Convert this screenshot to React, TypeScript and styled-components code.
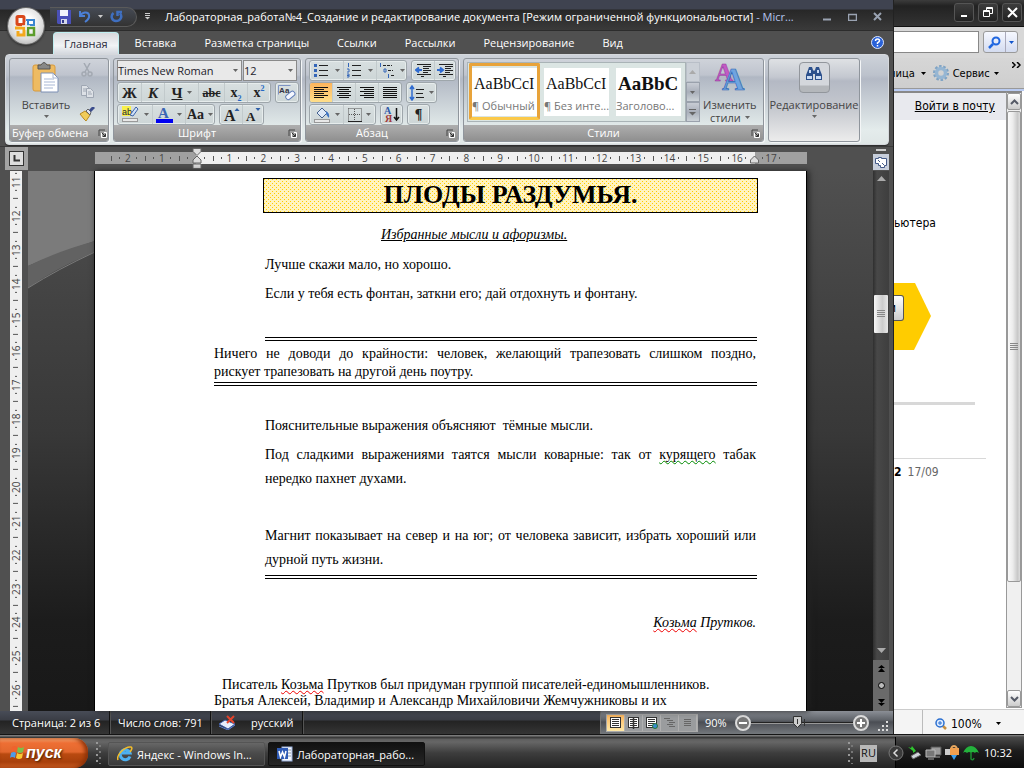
import React from "react";
import styled, { createGlobalStyle, css } from "styled-components";

const UI = '"Open Sans", "Noto Sans", sans-serif';
const TAHOMA = '"DejaVu Sans Condensed", "DejaVu Sans", sans-serif';
const SERIF = '"Liberation Serif", "Times New Roman", serif';

const Global = createGlobalStyle`
  * { box-sizing: border-box; }
  body { margin: 0; background: #1a1a1a; font-family: ${UI}; font-size: 12px; }
  button, select, input { font: inherit; color: inherit; margin: 0; }
  button { border: 0; padding: 0; background: none; cursor: pointer; }
  svg { display: block; flex: none; }
`;

const Screen = styled.div`
  display: flex;
  flex-direction: column;
  min-height: 100vh;
  overflow: hidden;
`;
const Desktop = styled.div`
  flex: 1;
  display: flex;
  min-height: 0;
`;

/* ---------- Word window ---------- */
const Word = styled.section`
  position: relative;
  flex: 1;
  min-width: 0;
  display: flex;
  flex-direction: column;
  background: #505050;
  border-right: 1px solid #222;
`;
const TitleBar = styled.header`
  height: 31px;
  display: flex;
  align-items: center;
  padding: 3px 8px 0 50px;
  background: linear-gradient(#3f4350 0 9px, #272727 10px, #3a3a3a 30px);
  border-bottom: 1px solid #2c2c2c;
  color: #fff;
`;
const QuickAccess = styled.div`
  display: flex;
  align-items: center;
  height: 20px;
  width: 87px;
  padding-left: 7px;
  gap: 7px;
  border: 1px solid #5a5a5a;
  border-left: 0;
  border-radius: 0 10px 10px 0;
  background: linear-gradient(#454a54, #333);
`;
const QuickMore = styled.button`
  margin: 0 14px 0 7px;
`;
const Title = styled.h1`
  flex: 1;
  min-width: 0;
  margin: 0;
  font-size: 11px;
  line-height: 18px;
  font-weight: 500;
  white-space: nowrap;
  span { color: #b5c5ee; }
`;
const Caption = styled.div`
  display: flex;
  gap: 9px;
`;
const CaptionButton = styled.button`
  display: grid;
  place-items: center;
  width: 16px;
  height: 16px;
`;
const OfficeButton = styled.button`
  position: absolute;
  left: 8px;
  top: 8px;
  width: 36px;
  height: 36px;
  border-radius: 50%;
  display: grid;
  place-items: center;
  background: radial-gradient(circle at 50% 40%, #fff 20%, #dcdcdc 60%, #9a9a9a);
  box-shadow: 0 0 0 1px #6b6b6b, 0 1px 3px #111;
`;
const Tabs = styled.nav`
  display: flex;
  align-items: flex-end;
  height: 23px;
  padding: 0 9px 0 53px;
`;
const Tab = styled.button<{ $active?: boolean }>`
  height: 22px;
  padding: 0 14px;
  color: #fff;
  font-weight: 500;
  font-size: 11px;
  line-height: 22px;
  white-space: nowrap;
  ${(p) =>
    p.$active &&
    css`
      padding: 0 10px;
      margin-right: 2px;
      color: #2b2b3c;
      border: 1px solid #bfeef0;
      border-bottom: 0;
      border-radius: 4px 4px 0 0;
      background: linear-gradient(#d8d8dc, #f1f3f5 60%, #d4d8de);
    `}
`;
const Help = styled.button`
  margin-left: auto;
  align-self: center;
`;
const Ribbon = styled.div`
  display: flex;
  gap: 4px;
  height: 91px;
  margin: 0 4px 0 5px;
  padding: 3px;
  border: 1px solid #d5d8dc;
  border-radius: 4px;
  background: linear-gradient(#cdd2d9, #bcc2cc 20px, #b3b9c5 24px, #e4ecec 75px, #dfe6e6);
  box-shadow: 0 1px 1px #2b2b2b;
`;
const GroupBox = styled.section<{ $w: number; $plain?: boolean }>`
  width: ${(p) => p.$w}px;
  height: 84px;
  display: flex;
  flex-direction: column;
  align-items: ${(p) => (p.$plain ? "center" : "stretch")};
  border: 1px solid #8f959c;
  border-radius: 3px;
  box-shadow: 1px 1px 0 #f4f6f7;
  background: ${(p) =>
    p.$plain
      ? "linear-gradient(#dfe1e4, #c4c8d0 18px, #b4b9c4 22px, #c6c9cf 50px, #ececec)"
      : "linear-gradient(#cfd3da, #bfc4ce 16px, #b0b7c3 18px, #e0e8e8 66px)"};
  overflow: hidden;
`;
const GroupBody = styled.div`
  flex: 1;
  min-height: 0;
  display: flex;
  padding: 1px 3px 0;
`;
const GroupFoot = styled.footer`
  display: flex;
  align-items: center;
  height: 16px;
  padding: 0 3px 0 2px;
  background: linear-gradient(#aeaeae, #8f8f8f);
  color: #fff;
  h2 {
    flex: 1;
    margin: 0;
    padding-right: 10px;
    font-size: 11px;
    line-height: 14px;
    font-weight: 400;
    text-align: center;
    white-space: nowrap;
  }
`;
const Rows = styled.div`
  display: flex;
  flex-direction: column;
  gap: 1px;
`;
const ToolRow = styled.div<{ $gap?: number }>`
  display: flex;
  height: 21px;
  gap: ${(p) => p.$gap ?? 4}px;
`;
const Cluster = styled.div`
  display: flex;
  border: 1px solid #9ea6ab;
  border-radius: 3px;
  background: linear-gradient(#d8dfe0, #cdd6d7);
  box-shadow: inset 0 0 0 1px #e6ecec;
  overflow: hidden;
`;
const Tool = styled.button<{ $w: number; $on?: boolean }>`
  width: ${(p) => p.$w}px;
  display: flex;
  align-items: center;
  justify-content: center;
  gap: 4px;
  & + & { border-left: 1px solid #c2cacc; }
  ${(p) => p.$on && "background: linear-gradient(#fdb45b, #ffdf8a);"}
`;
const Glyph = styled.span<{ $size?: number; $italic?: boolean; $under?: boolean; $strike?: boolean }>`
  font-family: ${SERIF};
  font-weight: 700;
  font-size: ${(p) => p.$size ?? 14}px;
  line-height: 16px;
  color: #222;
  font-style: ${(p) => (p.$italic ? "italic" : "normal")};
  text-decoration: ${(p) => (p.$under ? "underline" : p.$strike ? "line-through" : "none")};
  sub, sup { font-size: 8px; line-height: 0; color: #2468c4; }
`;
const SelectBox = styled.div<{ $w: number }>`
  position: relative;
  width: ${(p) => p.$w}px;
  height: 21px;
  select {
    width: 100%;
    height: 100%;
    appearance: none;
    border: 1px solid #8a8a8a;
    border-radius: 0;
    background: #e9e9e9;
    padding: 0;
    color: #1c1c2c;
    font-family: ${UI};
    font-size: 11px;
  }
  svg { position: absolute; right: 4px; top: 9px; pointer-events: none; }
`;
const BigButton = styled.button<{ $w: number }>`
  width: ${(p) => p.$w}px;
  display: flex;
  flex-direction: column;
  align-items: center;
  padding-top: 2px;
  color: #444;
  font-size: 11px;
  line-height: 13px;
  > :first-child { margin-bottom: 5px; }
`;
const ButtonText = styled.span`
  display: flex;
  align-items: center;
  justify-content: center;
  gap: 4px;
  min-height: 10px;
  white-space: nowrap;
`;
const SideTools = styled.div`
  display: flex;
  flex-direction: column;
  align-items: center;
  gap: 8px;
  padding-top: 3px;
`;
const Gallery = styled.div`
  display: flex;
  width: 219px;
  height: 60px;
  margin-top: 2px;
  padding: 0 1px;
  gap: 1px;
  border: 1px solid #a9b3b6;
  background: #dbe5e3;
`;
const StyleCard = styled.button<{ $on?: boolean }>`
  width: 71px;
  height: 57px;
  padding: 4px 3px;
  ${(p) =>
    p.$on &&
    css`
      padding: 1px 0;
      border: 3px solid #e8a33a;
      border-bottom-color: #fbc94a;
      border-radius: 2px;
    `}
`;
const CardFace = styled.span<{ $bold?: boolean }>`
  display: flex;
  flex-direction: column;
  height: 48px;
  background: #fff;
  overflow: hidden;
  white-space: nowrap;
  b {
    padding: 6px 0 0 2px;
    text-align: left;
    height: 28px;
    font-family: ${SERIF};
    font-weight: ${(p) => (p.$bold ? 700 : 400)};
    font-size: ${(p) => (p.$bold ? 19 : 16)}px;
    line-height: 20px;
    color: #111;
  }
  small { font-size: 11px; line-height: 20px; color: #777; text-align: left; }
`;
const GalleryScroll = styled.div`
  width: 14px;
  height: 60px;
  margin-top: 2px;
  display: flex;
  flex-direction: column;
  button {
    flex: 1;
    display: grid;
    place-items: center;
    border: 1px solid #9aa1ac;
    background: linear-gradient(#c8ccd4, #a9afba 50%, #cdd3d8);
  }
  button:first-child { background: #cbd0d7; border-color: #b9bfc8; }
`;
const EditFace = styled.span`
  width: 31px;
  height: 31px;
  margin-top: 1px;
  display: grid;
  justify-items: center;
  padding-top: 3px;
  border: 1px solid #92969c;
  border-radius: 4px;
  background: linear-gradient(#d4d7dc 0 22px, #b4b7bb 23px);
`;

/* ---------- rulers and canvas ---------- */
const RulerRow = styled.div`
  display: flex;
  height: 25px;
  padding-left: 5px;
  border-top: 1px solid #3a3a3a;
  margin-top: 1px;
`;
const TabStop = styled.button`
  width: 23px;
  height: 23px;
  margin-right: 67px;
  display: grid;
  place-items: center;
  border: 4px solid #a3a3a3;
  background: #ddd;
  outline: 1px solid #333;
  outline-offset: -5px;
`;
const HRuler = styled.div`
  position: relative;
  display: flex;
  flex: 1;
  max-width: 712px;
  height: 12px;
  padding-left: 16px;
  margin-top: 5px;
  background: linear-gradient(90deg, #a0a0a0 101px, #efefef 101px 660px, #a0a0a0 660px);
  svg { position: absolute; top: -4px; }
`;
const HTrack = styled.div`
  display: flex;
  flex: none;
  width: 677px;
`;
const HCell = styled.span`
  flex: 1;
  font-size: 10px;
  line-height: 12px;
  text-align: center;
  color: #444;
  background:
    linear-gradient(#555, #555) 0 4px / 1px 5px no-repeat,
    linear-gradient(#555, #555) 8px 5px / 1px 2px no-repeat,
    linear-gradient(#555, #555) 25px 5px / 1px 2px no-repeat;
`;
const Marker = styled.svg<{ $x: number }>`
  left: ${(p) => p.$x}px;
`;
const Work = styled.div`
  flex: 1;
  display: flex;
  min-height: 0;
`;
const VRuler = styled.div`
  flex: none;
  width: 12px;
  margin: 0 6px 0 10px;
  height: 540px;
  overflow: hidden;
  background: #efefef;
`;
const VTrack = styled.div`
  display: flex;
  flex-direction: column;
  height: 542px;
  margin-top: -6px;
`;
const VCell = styled.span`
  flex: 1;
  width: 12px;
  writing-mode: vertical-rl;
  transform: rotate(180deg);
  font-size: 10px;
  line-height: 12px;
  text-align: center;
  color: #444;
  background:
    linear-gradient(#555, #555) 4px 0 / 5px 1px no-repeat,
    linear-gradient(#555, #555) 5px 8px / 2px 1px no-repeat,
    linear-gradient(#555, #555) 5px 25px / 2px 1px no-repeat;
`;
const Canvas = styled.div`
  position: relative;
  flex: 1;
  min-width: 0;
  display: flex;
  padding: 0 66px 0 66px;
  background: linear-gradient(#505050, #434343 130px, #383838 260px, #1c1c1c 450px, #181818);
`;
const Wave = styled.svg`
  position: absolute;
  left: 0;
  top: 0;
`;
const Paper = styled.article`
  position: relative;
  flex: 1;
  min-width: 0;
  padding: 7px 50px 0 119px;
  background: #fff;
  border: solid #000;
  border-width: 0 1px;
  box-shadow: 2px 0 6px #222;
  font-family: ${SERIF};
  font-size: 14px;
  color: #000;
`;
const Headline = styled.h2`
  margin: 0 -2px 12px 49px;
  height: 35px;
  border: 1px solid #000;
  font-size: 26px;
  line-height: 31px;
  text-align: center;
  background: #fff3bf url("data:image/svg+xml,%3Csvg xmlns='http://www.w3.org/2000/svg' width='4' height='4' shape-rendering='crispEdges'%3E%3Cpath d='M0 0h1v1H0zM2 2h1v1H2z' fill='%23ffcc00'/%3E%3C/svg%3E");
`;
const Line = styled.p<{ $mt?: number; $indent?: number; $justify?: boolean; $h?: number; $italic?: boolean; $right?: boolean }>`
  margin: ${(p) => p.$mt ?? 0}px 0 0 ${(p) => p.$indent ?? 51}px;
  line-height: ${(p) => p.$h ?? 20}px;
  white-space: nowrap;
  text-align: ${(p) => (p.$right ? "right" : "left")};
  font-style: ${(p) => (p.$italic ? "italic" : "normal")};
  ${(p) => p.$justify && "text-align-last: justify;"}
`;
const Rule = styled.hr<{ $mt: number; $indent?: number }>`
  height: 4px;
  margin: ${(p) => p.$mt}px -1px 0 ${(p) => p.$indent ?? 51}px;
  border: solid #000;
  border-width: 1px 0;
`;
const Spell = styled.span<{ $c: string }>`
  text-decoration: underline wavy ${(p) => p.$c} 1px;
  text-decoration-skip-ink: none;
  text-underline-offset: 1px;
`;
const WordScroll = styled.aside`
  flex: none;
  width: 16px;
  margin-right: 4px;
  display: flex;
  flex-direction: column;
  align-items: center;
  background: linear-gradient(90deg, #2f2f2f, #484848 4px, #3e3e3e);
`;
const SplitBox = styled.div`
  margin-left: auto;
  margin-right: 4px;
  width: 16px;
  display: flex;
  flex-direction: column;
  align-items: center;
  gap: 3px;
  padding-top: 2px;
  i { width: 10px; height: 2px; background: #ccc; }
  button { background: #c7cedb; width: 16px; height: 16px; display: grid; place-items: center; }
`;
const Thumb = styled.div`
  width: 14px;
  height: 38px;
  margin: 113px 0 auto;
  display: grid;
  place-items: center;
  border-radius: 1px;
  background: linear-gradient(90deg, #f7f7f7, #ccc 60%, #e8e8e8);
`;
const PageNav = styled.div`
  width: 16px;
  height: 51px;
  margin-top: 7px;
  display: flex;
  flex-direction: column;
  align-items: center;
  justify-content: space-around;
  background: #6a6a6a;
`;
const Status = styled.footer`
  display: flex;
  height: 23px;
  background: linear-gradient(#484c57, #3a3d45 9px, #232323 10px, #353535);
  color: #fff;
  font-size: 11px;
  font-weight: 500;
  line-height: 21px;
`;
const StatusItem = styled.span<{ $w: number }>`
  width: ${(p) => p.$w}px;
  padding-left: 8px;
  border-right: 1px solid #111;
  box-shadow: 1px 0 0 #555;
  white-space: nowrap;
  display: flex;
  align-items: center;
  gap: 15px;
  &:first-child { padding-left: 12px; }
`;
const ViewBar = styled.div`
  margin-left: auto;
  width: 293px;
  display: flex;
  align-items: center;
  padding-left: 5px;
  border-left: 1px solid #777;
  background: linear-gradient(#8b8f96, #5f6369 9px, #4b4e54 11px, #74787c);
`;
const Views = styled.div`
  display: flex;
  width: 92px;
  height: 18px;
  border: 1px solid #aaa;
  background: #9a9c9e;
`;
const ViewButton = styled.button<{ $on?: boolean }>`
  flex: 1;
  display: grid;
  place-items: center;
  border-right: 1px solid #b0b0b0;
  ${(p) => p.$on && "background: linear-gradient(#fbb65f, #ffe9a8);"}
`;
const ZoomValue = styled.span`
  width: 37px;
  padding-left: 7px;
  font-weight: 400;
  font-size: 11px;
`;
const Round = styled.button`
  width: 16px;
  height: 16px;
  border-radius: 50%;
  border: 2px solid #dcdcdc;
  display: grid;
  place-items: center;
  background: #777;
`;
const ZoomTrack = styled.div`
  width: 102px;
  height: 16px;
  display: flex;
  align-items: center;
  background: linear-gradient(#222 0 1px, #999 1px) 0 7px / 100% 2px no-repeat;
  svg { margin-left: 42px; }
`;
const Grip = styled.span`
  margin: auto 4px 2px auto;
`;

/* ---------- Browser window ---------- */
const Browser = styled.section`
  flex: none;
  width: 130px;
  display: flex;
  flex-direction: column;
  overflow: hidden;
  background: #fff;
  font-family: ${TAHOMA};
  font-size: 11px;
  color: #000;
`;
const BrowserTitle = styled.header`
  height: 27px;
  display: flex;
  justify-content: flex-end;
  align-items: center;
  gap: 4px;
  padding: 0 2px 2px 0;
  background: linear-gradient(#3c3c3c, #222 6px, #333);
  border-bottom: 1px solid #111;
  button {
    width: 20px;
    height: 19px;
    display: grid;
    place-items: center;
    border: 1px solid #555;
    border-radius: 3px;
    background: linear-gradient(#3c3c3c, #222);
  }
`;
const SearchRow = styled.div`
  height: 31px;
  display: flex;
  align-items: center;
  gap: 4px;
  padding: 0 6px 1px 0;
  background: #d8d8d8;
  input {
    width: 85px;
    height: 22px;
    border: 1px solid #888;
    border-left: 0;
    background: #fff;
  }
  div { display: flex; border: 1px solid #9a9a9a; border-radius: 3px; background: linear-gradient(#f6f8ff, #d4dcf0); }
  button { height: 20px; width: 21px; display: grid; place-items: center; }
  button + button { width: 12px; border-left: 1px solid #aab; }
`;
const CommandRow = styled.div`
  height: 31px;
  display: flex;
  align-items: center;
  background: linear-gradient(#d6d6d6, #cecece);
  border-bottom: 1px solid #999;
  button { display: flex; align-items: center; gap: 6px; }
  button:first-child { margin-left: -5px; }
  button:nth-child(2) { margin-left: 7px; gap: 4px; }
  button:last-child { margin: 0 3px 16px auto; }
`;
const BrowserBody = styled.div`
  flex: 1;
  display: flex;
  border-top: 2px solid #b9cbf2;
  min-height: 0;
`;
const Site = styled.div`
  flex: 1;
  min-width: 0;
  border-top: 2px solid #888;
`;
const MailBar = styled.div`
  height: 27px;
  padding: 6px 11px 0 0;
  text-align: right;
  background: #e8e9ee;
  font-size: 12px;
  a { color: #000; }
`;
const Fragment = styled.p`
  margin: 95px 0 0;
  font-size: 12px;
  line-height: 16px;
`;
const Arrow = styled.div`
  margin-top: 52px;
  display: flex;
  align-items: flex-start;
  width: 37px;
  height: 67px;
  padding-top: 12px;
  background: #fc0;
  clip-path: polygon(0 0, 21px 0, 37px 33px, 20px 67px, 0 67px);
  button {
    width: 10px;
    height: 26px;
    border: 1px solid #555;
    border-left: 0;
    border-radius: 0 3px 3px 0;
    background: linear-gradient(#fff, #ccc);
    overflow: hidden;
    font-size: 12px;
    text-indent: -5px;
    text-align: left;
  }
`;
const Bar = styled.hr<{ $w: number; $h: number; $mt: number }>`
  width: ${(p) => p.$w}px;
  height: ${(p) => p.$h}px;
  margin: ${(p) => p.$mt}px 0 0;
  border: 0;
  background: #d8d8d8;
`;
const DateLine = styled.p`
  margin: 5px 0 0;
  font-size: 12px;
  line-height: 16px;
  color: #666;
  b { color: #000; margin-right: 6px; }
`;
const BrowserScroll = styled.aside`
  width: 16px;
  margin-right: 2px;
  display: flex;
  flex-direction: column;
  border: 1px solid #999;
  border-top: 2px solid #888;
  background: #f0f0f0;
  button {
    height: 17px;
    flex: none;
    display: grid;
    place-items: center;
    border: 1px solid #999;
    border-radius: 2px;
    background: linear-gradient(#fff, #ccc);
  }
  div {
    height: 471px;
    margin: 1px 0 auto;
    display: grid;
    place-items: center;
    border: 1px solid #999;
    border-radius: 2px;
    background: linear-gradient(90deg, #fafafa, #ececec 40%, #c8c8c8 80%, #ddd);
  }
`;
const BrowserStatus = styled.footer`
  height: 25px;
  display: flex;
  align-items: center;
  padding-left: 29px;
  margin-top: 1px;
  border-top: 1px solid #ccc;
  background: linear-gradient(90deg, #f4f4f4 28px, #bbb 28px 29px, #f4f4f4 29px);
  font-size: 12px;
  button { display: flex; align-items: center; gap: 4px; margin: 3px 0 0 12px; }
  button svg:last-child { margin-left: 10px; }
`;

/* ---------- Taskbar ---------- */
const Taskbar = styled.footer`
  display: flex;
  height: 34px;
  padding-top: 4px;
  background: linear-gradient(#151515 0 1px, #7a7a7a 1px 2px, #3a3a3a 3px 4px, #5e5e5e 5px, #666 8px, #3d3d3d 19px, #232323);
  color: #fff;
  font-family: ${UI};
  font-size: 11px;
`;
const Start = styled.button`
  width: 88px;
  display: flex;
  align-items: center;
  gap: 1px;
  padding-left: 10px;
  border-radius: 0 14px 14px 0;
  background: linear-gradient(#ffb27c, #ee6f34 5px, #e2672d 14px, #b94a10 16px, #a8400c 24px, #d06024);
  box-shadow: inset -3px 0 4px #8a3108;
  color: #fff;
  font-family: "Liberation Sans", Arial, sans-serif;
  font-size: 16px;
  font-weight: 700;
  font-style: italic;
  text-shadow: 1px 1px 2px #420;
`;
const Dots = styled.span`
  width: 6px;
  margin: 4px 6px 4px 8px;
  background:
    radial-gradient(circle at 1px 1px, #999 1px, transparent 1px) 0 0 / 6px 6px,
    radial-gradient(circle at 1px 1px, #777 1px, transparent 1px) 3px 3px / 6px 6px;
`;
const TrayDots = styled(Dots)`
  margin-left: auto;
`;
const Task = styled.button<{ $on?: boolean }>`
  width: 157px;
  height: 24px;
  margin: 4px 3px 0 0;
  padding: 0 8px;
  display: flex;
  align-items: center;
  gap: 4px;
  border-radius: 2px;
  border: 1px solid ${(p) => (p.$on ? "#111" : "#555")};
  background: ${(p) => (p.$on ? "linear-gradient(#111, #262626)" : "linear-gradient(#676767, #4b4b4b 10px, #3a3a3a)")};
  white-space: nowrap;
`;
const Tray = styled.div`
  display: flex;
  align-items: center;
  gap: 3px;
  width: 129px;
  margin-top: -1px;
  border-left: 1px solid #000;
  background: linear-gradient(#4a4a4a, #1c1c1c 14px, #0c0c0c);
  svg:first-child { margin-left: -8px; }
  time { margin-left: 2px; }
`;
const Lang = styled.button`
  width: 17px;
  height: 17px;
  align-self: center;
  margin-right: 18px;
  background: #b8b8b8;
  color: #111;
  line-height: 16px;
`;

/* ---------- icons ---------- */
const Down = ({ c = "#666", s = 5 }: { c?: string; s?: number }) => (
  <svg width={s} height={s > 6 ? 5 : 3} viewBox="0 0 6 3" preserveAspectRatio="none"><path d="M0 0h6L3 3z" fill={c} /></svg>
);
const Launcher = () => (
  <svg width="9" height="9"><path d="M1 7V1h6" stroke="#444" fill="none" /><path d="M3.500 4v4.500h5v-5H6" stroke="#fff" fill="none" /><path d="M4 4l3 3M7.500 5v2.500H5" stroke="#333" fill="none" /></svg>
);
const OfficeLogo = () => (
  <svg width="24" height="24" fill="none" strokeWidth="3">
    <rect x="3" y="2.500" width="7" height="8" rx="1" stroke="#d9481c" />
    <path d="M12 6h2m5 0h2M14 6h6v5h-6z" stroke="#3a86d0" strokeWidth="2" />
    <path d="M3 14h7v7H4v-4M1 14h3" stroke="#f3a81c" />
    <rect x="14" y="14" width="6" height="7" stroke="#5c9d2c" strokeWidth="2.500" />
    <path d="M8 12h8M12 8v8" stroke="#f1efe9" strokeWidth="1.500" />
  </svg>
);
const SaveIcon = () => (
  <svg width="14" height="14"><path d="M0 0h14v14H1l-1-1z" fill="#4a50b8" /><path d="M3 0h8v6H3z" fill="#f2f4fb" /><path d="M4 9h6v5H4z" fill="#d5d9e8" /><path d="M5 10h2v3H5z" fill="#333a8a" /></svg>
);
const UndoIcon = () => (
  <svg width="13" height="13" fill="none" stroke="#4b7fd6" strokeWidth="2"><path d="M2 1v5h5M2 6c2-4 8-5 9-1 .7 3-1 5-4 7" /></svg>
);
const RedoIcon = () => (
  <svg width="13" height="13" fill="none" stroke="#3f6fc0" strokeWidth="2.500"><path d="M3.500 3C0 6 2 11 6 11s7-4 4-7.500M12 2H7.500v4" /></svg>
);
const PasteIcon = () => (
  <svg width="28" height="31"><rect x="1" y="3" width="22" height="26" rx="2" fill="#eebb62" stroke="#d89a3c" /><path d="M6 3h3q3-5 6 0h3v4H6z" fill="#888" stroke="#555" /><path d="M9 11h12l5 5v14H9z" fill="#fff" stroke="#7d8fb4" /><path d="M21 11v5h5M12 17h10M12 20h11M12 23h11M12 26h9" stroke="#a8b7d4" fill="none" /></svg>
);
const CutIcon = () => (
  <svg width="14" height="14" fill="none" stroke="#a3a9b2" strokeWidth="1.500"><path d="M4 0l5 9M10 0L5 9" /><circle cx="4" cy="11" r="2" /><circle cx="10" cy="11" r="2" /></svg>
);
const CopyIcon = () => (
  <svg width="15" height="14" fill="#dde1e6" stroke="#9fa7b3"><path d="M1.500.5h5l3 3v7h-8z" /><path d="M6.500 3.500h4l3 3v6h-7z" /><path d="M8 7h3M8 9h4M3 4h3M3 6h3" /></svg>
);
const BrushIcon = () => (
  <svg width="16" height="14"><path d="M1 7l5-3 5 4-4 6-2-2z" fill="#f0cc5a" stroke="#b98a22" /><path d="M7 4l2-2 3 3-1 3z" fill="#dfe3ee" stroke="#666" /><path d="M11 4l4-4" stroke="#3b4c8c" strokeWidth="3" /></svg>
);
const EraserIcon = () => (
  <svg width="18" height="16"><text x="1" y="8" fontFamily="Liberation Sans" fontSize="8" fontWeight="700" fill="#334">Аа</text><path d="M0.500 9.500V.5h12" stroke="#7d93c4" fill="none" /><rect x="7" y="8" width="10" height="5" rx="2" transform="rotate(-40 12 10)" fill="#f5f7ff" stroke="#5d7bb8" /></svg>
);
const Highlighter = () => (
  <svg width="18" height="17"><rect x="0" y="0" width="9" height="10" fill="#f8f04a" /><text x="0" y="9" fontFamily="Liberation Sans" fontSize="9" fill="#223">ab</text><path d="M8 9l6-8 2 2-5 7z" fill="#cfe0f8" stroke="#3c63a8" /><rect x=".5" y="12.500" width="15" height="3" fill="#e8e8e8" stroke="#999" /></svg>
);
const FontColor = () => (
  <svg width="17" height="17"><text x="2" y="12" fontFamily="Liberation Serif" fontWeight="700" fontSize="15" fill="#3c66b4">A</text><rect x="0" y="13" width="17" height="4" fill="#0000f0" /></svg>
);
const GrowIcon = ({ grow }: { grow?: boolean }) => (
  <svg width="17" height="16"><text x="1" y="14" fontFamily="Liberation Serif" fontWeight="700" fontSize={grow ? 16 : 13} fill="#222">A</text><path d={grow ? "M11.500 4h5L14 1z" : "M10.500 1h5L13 4z"} fill="#2f5fa8" /></svg>
);
const ListIcon = ({ kind }: { kind: number }) => (
  <svg width="17" height="15" stroke="#222" fill="none">
    {kind < 2 && <path d="M5 2.500h9M5 7.500h9M5 12.500h9" />}
    {kind === 0 && <path d="M0 2.500h3M0 7.500h3M0 12.500h3" stroke="#3466b8" strokeWidth="3" />}
    {kind === 1 && <path d="M1.500 0v4M0 6h2v3H0M0 11h2v3H0M0 12.500h2" stroke="#3466b8" />}
    {kind === 2 && <><path d="M4 2.500h9M9 7.500h5M12 12.500h4" strokeDasharray="3 1" /><path d="M1.500 0v4M5 6h2v3H5zM9.500 11v4" stroke="#3466b8" /></>}
  </svg>
);
const IndentIcon = ({ out }: { out?: boolean }) => (
  <svg width="17" height="15" stroke="#222" fill="none"><path d="M2 1.500h14M8 3.500h8M8 5.500h6M8 7.500h8M8 9.500h5M2 11.500h14M6 13.500h3" /><path d={out ? "M7 7H1M4 4.500L1 7l3 2.500" : "M0 7h6M3 4.500L6 7 3 9.500"} stroke="#2f6bd0" strokeWidth="2" /></svg>
);
const AlignIcon = ({ kind }: { kind: "l" | "c" | "r" | "j" }) => (
  <svg width="14" height="12" stroke="#111">
    {[0, 1, 2, 3, 4, 5].map((i) => {
      const w = kind === "j" || i % 2 === 0 ? 14 : 10;
      const x = kind === "r" ? 14 - w : kind === "c" ? (14 - w) / 2 : 0;
      return <path key={i} d={`M${x} ${i * 2 + 0.5}h${w}`} />;
    })}
  </svg>
);
const SpacingIcon = () => (
  <svg width="16" height="16" stroke="#222" fill="none"><path d="M7 4.500h8M7 8.500h7M7 12.500h8" /><path d="M3 1v14M1 4l2-3 2 3M1 12l2 3 2-3" stroke="#2f6bd0" strokeWidth="1.500" /></svg>
);
const BucketIcon = () => (
  <svg width="17" height="16"><path d="M3 6l5-5 5 5-5 5z" fill="#dfe9f7" stroke="#44618f" /><path d="M12 4q4 2 3 7-2-2-3-4z" fill="#3f74c4" /><rect x=".5" y="12.500" width="15" height="3" fill="#e8e8e8" stroke="#999" /></svg>
);
const BorderIcon = () => (
  <svg width="14" height="14" stroke="#555" fill="none"><path d="M.5.5h13v13M.5.5v13M6.500 1v12M1 6.500h12" strokeDasharray="1 1" /><path d="M0 13.500h14" stroke="#222" /></svg>
);
const SortIcon = () => (
  <svg width="16" height="17"><text x="0" y="8" fontFamily="Liberation Serif" fontWeight="700" fontSize="10" fill="#2f5aa8">А</text><text x="1" y="16" fontFamily="Liberation Serif" fontWeight="700" fontSize="10" fill="#a33a3a">Я</text><path d="M12.500 2v12M10 11l2.500 3 2.500-3" stroke="#111" fill="none" strokeWidth="1.500" /></svg>
);
const StylesIcon = () => (
  <svg width="32" height="31" fontFamily="Liberation Serif" fontWeight="700"><text x="1" y="19" fontSize="25" fill="#c25ac4" stroke="#93379a" strokeWidth=".5">A</text><text x="8" y="28" fontSize="31" fill="#6fa4e0" stroke="#2f67b4" strokeWidth=".7">A</text></svg>
);
const Binoculars = () => (
  <svg width="16" height="15" fill="#2c508c"><path d="M2 4l1-3h3l1 3 1 1 1-1 1-3h3l1 3 2 5v5H9V8H7v6H0V9z" /><path d="M1 10h5v3H1zM10 10h5v3h-5zM3 4h2v3H3zM11 4h2v3h-2z" fill="#c9daf2" /></svg>
);
const Up = ({ c = "#aaa" }: { c?: string }) => <svg width="7" height="4"><path d="M0 4h7L3.500 0z" fill={c} /></svg>;
const Lines = () => <svg width="8" height="8" stroke="#888"><path d="M0 .5h8M0 2.500h8M0 4.500h8M0 6.500h8" /></svg>;
const IeIcon = () => (
  <svg width="16" height="16" fill="none"><path d="M13 10.500A5 5 0 1 1 13 7H5" stroke="#4db0f0" strokeWidth="3" /><path d="M1 14C-1 9 8 0 14 1c2 .5 0 4-1 5" stroke="#f3bd2a" strokeWidth="1.500" /></svg>
);
const WordIcon = () => (
  <svg width="16" height="16"><rect x="5" y="1" width="10" height="14" fill="#f4f7fd" stroke="#9ab0dc" /><path d="M11 4h3M11 7h3M11 10h3" stroke="#89a" /><rect x="0" y="2" width="11" height="11" fill="#2f5bb5" /><path d="M2 5l1.500 6L5.500 6l2 5L9 5" stroke="#fff" fill="none" strokeWidth="1.500" /></svg>
);
const Flag = () => (
  <svg width="15" height="16"><path d="M2 2q3-2 5 0L6 7Q3 5 1 7z" fill="#f0622d" /><path d="M8 2q3 2 6 0l-1 5q-3 2-6 0z" fill="#7cc04a" /><path d="M1 8q3-2 5 0l-1 5q-3-2-5 0z" fill="#4e9be8" /><path d="M7 8q3 2 6 0l-1 5q-3 2-6 0z" fill="#fbc832" /></svg>
);
const SpellIcon = () => (
  <svg width="17" height="15"><path d="M0 9l6-4 10 4-7 5z" fill="#e8eefc" stroke="#3c5ca8" /><path d="M0 11l9 4 7-5" stroke="#5c7fd0" fill="none" /><path d="M8 1l7 7M15 1L8 8" stroke="#e8452c" strokeWidth="2" /></svg>
);
const ViewIcon = ({ i }: { i: number }) => {
  const c = i > 2 ? "#666" : "#333";
  return (
    <svg width="13" height="12" stroke={c} fill="none">
      {i < 3 && <rect x="1.500" y=".5" width="10" height="10" fill="#fff" />}
      {i === 3 ? <path d="M1 1.500h6M4 3.500h6M6 5.500h6M4 7.500h6M6 9.500h6" /> : <path d="M3 2.500h7M3 4.500h7M3 6.500h7M3 8.500h7" />}
      {i === 1 && <path d="M6.500 0v12" strokeWidth="1.500" />}
      {i === 2 && <circle cx="10" cy="9" r="2.500" fill="#3a8ad0" stroke="#297a3a" />}
    </svg>
  );
};

const Horizontal = ["2", "1", "", ...Array.from({ length: 17 }, (_, i) => String(i + 1))];
const Vertical = Array.from({ length: 16 }, (_, i) => String(i + 11));

function Group({ name, w, children }: { name: string; w: number; children: React.ReactNode }) {
  return (
    <GroupBox $w={w} aria-label={name}>
      <GroupBody>{children}</GroupBody>
      <GroupFoot>
        <h2>{name}</h2>
        <button aria-label={`Параметры: ${name}`}><Launcher /></button>
      </GroupFoot>
    </GroupBox>
  );
}

function RibbonBar() {
  return (
    <Ribbon>
      <Group name="Буфер обмена" w={100}>
        <BigButton $w={66}>
          <PasteIcon />
          <ButtonText>Вставить</ButtonText>
          <ButtonText><Down /></ButtonText>
        </BigButton>
        <SideTools>
          <button aria-label="Вырезать"><CutIcon /></button>
          <button aria-label="Копировать"><CopyIcon /></button>
          <button aria-label="Формат по образцу"><BrushIcon /></button>
        </SideTools>
      </Group>
      <Group name="Шрифт" w={188}>
        <Rows>
          <ToolRow $gap={1}>
            <SelectBox $w={125}>
              <select aria-label="Шрифт"><option>Times New Roman</option></select><Down />
            </SelectBox>
            <SelectBox $w={54}>
              <select aria-label="Размер"><option>12</option></select><Down />
            </SelectBox>
          </ToolRow>
          <ToolRow>
            <Cluster>
              <Tool $w={23}><Glyph $size={15}>Ж</Glyph></Tool>
              <Tool $w={23}><Glyph $size={15} $italic>К</Glyph></Tool>
              <Tool $w={34}><Glyph $size={15} $under>Ч</Glyph><Down /></Tool>
              <Tool $w={26}><Glyph $size={12} $strike>abc</Glyph></Tool>
              <Tool $w={23}><Glyph>x<sub>2</sub></Glyph></Tool>
              <Tool $w={23}><Glyph>x<sup>2</sup></Glyph></Tool>
            </Cluster>
            <Cluster><Tool $w={22} aria-label="Очистить формат"><EraserIcon /></Tool></Cluster>
          </ToolRow>
          <ToolRow>
            <Cluster>
              <Tool $w={34} aria-label="Выделение"><Highlighter /><Down /></Tool>
              <Tool $w={33} aria-label="Цвет текста"><FontColor /><Down /></Tool>
              <Tool $w={29}><Glyph>Aa</Glyph><Down /></Tool>
            </Cluster>
            <Cluster>
              <Tool $w={22} aria-label="Увеличить"><GrowIcon grow /></Tool>
              <Tool $w={21} aria-label="Уменьшить"><GrowIcon /></Tool>
            </Cluster>
          </ToolRow>
        </Rows>
      </Group>
      <Group name="Абзац" w={154}>
        <Rows>
          <ToolRow>
            <Cluster>
              <Tool $w={33} aria-label="Маркеры"><ListIcon kind={0} /><Down /></Tool>
              <Tool $w={33} aria-label="Нумерация"><ListIcon kind={1} /><Down /></Tool>
              <Tool $w={30} aria-label="Многоуровневый"><ListIcon kind={2} /><Down /></Tool>
            </Cluster>
            <Cluster>
              <Tool $w={22} aria-label="Уменьшить отступ"><IndentIcon out /></Tool>
              <Tool $w={21} aria-label="Увеличить отступ"><IndentIcon /></Tool>
            </Cluster>
          </ToolRow>
          <ToolRow>
            <Cluster>
              <Tool $w={22} $on aria-label="Влево"><AlignIcon kind="l" /></Tool>
              <Tool $w={23} aria-label="По центру"><AlignIcon kind="c" /></Tool>
              <Tool $w={23} aria-label="Вправо"><AlignIcon kind="r" /></Tool>
              <Tool $w={23} aria-label="По ширине"><AlignIcon kind="j" /></Tool>
            </Cluster>
            <Cluster><Tool $w={29} aria-label="Интервал"><SpacingIcon /><Down /></Tool></Cluster>
          </ToolRow>
          <ToolRow>
            <Cluster>
              <Tool $w={33} aria-label="Заливка"><BucketIcon /><Down /></Tool>
              <Tool $w={32} aria-label="Границы"><BorderIcon /><Down /></Tool>
            </Cluster>
            <Cluster><Tool $w={21} aria-label="Сортировка"><SortIcon /></Tool></Cluster>
            <Cluster><Tool $w={21}><Glyph>¶</Glyph></Tool></Cluster>
          </ToolRow>
        </Rows>
      </Group>
      <Group name="Стили" w={301}>
        <Gallery>
          <StyleCard $on><CardFace><b>AaBbCcI</b><small>¶ Обычный</small></CardFace></StyleCard>
          <StyleCard><CardFace><b>AaBbCcI</b><small>¶ Без инте...</small></CardFace></StyleCard>
          <StyleCard><CardFace $bold><b>AaBbC</b><small>Заголово...</small></CardFace></StyleCard>
        </Gallery>
        <GalleryScroll>
          <button aria-label="Вверх"><Up /></button>
          <button aria-label="Вниз"><Down /></button>
          <button aria-label="Все стили"><svg width="7" height="7"><path d="M0 .5h7" stroke="#666" /><path d="M0 3h7L3.500 6.500z" fill="#666" /></svg></button>
        </GalleryScroll>
        <BigButton $w={62}>
          <StylesIcon />
          <ButtonText>Изменить</ButtonText>
          <ButtonText>стили <Down /></ButtonText>
        </BigButton>
      </Group>
      <GroupBox $w={92} $plain>
        <BigButton $w={90}>
          <EditFace><Binoculars /></EditFace>
          <ButtonText>Редактирование</ButtonText>
          <ButtonText><Down /></ButtonText>
        </BigButton>
      </GroupBox>
    </Ribbon>
  );
}

function Document() {
  return (
    <Paper>
      <Headline>ПЛОДЫ РАЗДУМЬЯ.</Headline>
      <Line $indent={167} $italic><u>Избранные мысли и афоризмы.</u></Line>
      <Line $mt={10}>Лучше скажи мало, но хорошо.</Line>
      <Line $mt={9}>Если у тебя есть фонтан, заткни его; дай отдохнуть и фонтану.</Line>
      <Rule $mt={33} />
      <Line $mt={4} $indent={0} $h={18} $justify>Ничего не доводи до крайности: человек, желающий трапезовать слишком поздно,</Line>
      <Line $indent={0} $h={18}>рискует трапезовать на другой день поутру.</Line>
      <Rule $mt={1} $indent={0} />
      <Line $mt={30}>Пояснительные выражения объясняют&nbsp; тёмные мысли.</Line>
      <Line $mt={7} $h={24} $justify>Под сладкими выражениями таятся мысли коварные: так от <Spell $c="#080">курящего</Spell> табак</Line>
      <Line $h={24}>нередко пахнет духами.</Line>
      <Line $mt={33} $h={24} $justify>Магнит показывает на север и на юг; от человека зависит, избрать хороший или</Line>
      <Line $h={24}>дурной путь жизни.</Line>
      <Rule $mt={3} />
      <Line $mt={34} $italic $right><Spell $c="#e00">Козьма</Spell> Прутков.</Line>
      <Line $mt={44} $indent={8} $h={16}>Писатель <Spell $c="#e00">Козьма</Spell> Прутков был придуман группой писателей-единомышленников.</Line>
      <Line $indent={0} $h={16}>Братья Алексей, Владимир и Александр Михайловичи Жемчужниковы и их</Line>
    </Paper>
  );
}

export default function App() {
  return (
    <>
      <Global />
      <Screen>
        <Desktop>
          <Word>
            <TitleBar>
              <QuickAccess>
                <button aria-label="Сохранить"><SaveIcon /></button>
                <button aria-label="Отменить"><UndoIcon /></button>
                <Down c="#ccc" />
                <button aria-label="Повторить"><RedoIcon /></button>
              </QuickAccess>
              <QuickMore aria-label="Настройка панели"><svg width="7" height="7"><path d="M1 .5h5M1 2.500h5" stroke="#ccc" /><path d="M1 4h5L3.500 6.500z" fill="#ccc" /></svg></QuickMore>
              <Title>Лабораторная_работа№4_Создание и редактирование документа [Режим ограниченной функциональности] <span>- Micr...</span></Title>
              <Caption>
                <CaptionButton aria-label="Свернуть"><svg width="8" height="8"><path d="M0 6.500h8" stroke="#9aa3b2" strokeWidth="2" /></svg></CaptionButton>
                <CaptionButton aria-label="Развернуть"><svg width="9" height="8"><path d="M.5 1.500h8v6h-8zM0 1.500h9" stroke="#9aa3b2" fill="none" strokeWidth="1.500" /></svg></CaptionButton>
                <CaptionButton aria-label="Закрыть"><svg width="9" height="9"><path d="M1 1l7 7M8 1L1 8" stroke="#9aa3b2" strokeWidth="2" /></svg></CaptionButton>
              </Caption>
            </TitleBar>
            <Tabs>
              <Tab $active>Главная</Tab>
              {["Вставка", "Разметка страницы", "Ссылки", "Рассылки", "Рецензирование", "Вид"].map((t) => <Tab key={t}>{t}</Tab>)}
              <Help aria-label="Справка">
                <svg width="13" height="13"><circle cx="6.500" cy="6.500" r="6" fill="#2a62d8" stroke="#dfe9ff" /><path d="M4.500 5q0-2 2-2t2 1.800q0 1-2 2V8M6.500 9v1.500" stroke="#fff" strokeWidth="1.500" fill="none" /></svg>
              </Help>
            </Tabs>
            <OfficeButton aria-label="Office"><OfficeLogo /></OfficeButton>
            <RibbonBar />
            <RulerRow>
              <TabStop aria-label="Табуляция"><svg width="7" height="7"><path d="M1.500 0v5.500H7" stroke="#333" strokeWidth="2" fill="none" /></svg></TabStop>
              <HRuler>
                <HTrack>{Horizontal.map((n, i) => <HCell key={i}>{n}</HCell>)}</HTrack>
                <Marker $x={97} width="10" height="22"><path d="M1 .5h8v3l-4 4-4-4zM5 8l4 4v3H1v-3zM1 16h8v4.500H1z" fill="#ddd" stroke="#666" /></Marker>
                <Marker $x={655} width="9" height="22"><path d="M4.500 8l4 4v3h-8v-3z" fill="#ddd" stroke="#666" /></Marker>
              </HRuler>
              <SplitBox><i /><button aria-label="Линейка"><svg width="14" height="13" fill="#fff" stroke="#445a88"><path d="M1.500 2.500h3v-1h3v1h5v7h-2v2h-4v-2h-2v-2h-3z" /><path d="M4 4l2 2M8 7l2 2" /></svg></button></SplitBox>
            </RulerRow>
            <Work>
              <VRuler><VTrack>{Vertical.map((n) => <VCell key={n}>{n}</VCell>)}</VTrack></VRuler>
              <Canvas>
                <Wave width="67" height="140"><path d="M0 0h67v70Q30 82 0 95z" fill="#7b7b7b" /><path d="M0 95Q30 80 67 70v11Q30 96 0 117z" fill="#626262" /><path d="M0 117Q30 98 67 81" stroke="#7a7a7a" fill="none" /></Wave>
                <Document />
              </Canvas>
              <WordScroll>
                <svg width="9" height="11"><path d="M0 10h9L4.500 5z" fill="#aaa" /></svg>
                <Thumb><Lines /></Thumb>
                <Down c="#aaa" s={9} />
                <PageNav>
                  <svg width="7" height="7" fill="#000"><path d="M0 3h7L3.500 0zM0 7h7L3.500 3z" /></svg>
                  <svg width="7" height="7"><circle cx="3.500" cy="3.500" r="3" fill="#bbb" stroke="#000" /></svg>
                  <svg width="7" height="7" fill="#000"><path d="M0 0h7L3.500 4zM0 4h7L3.500 7z" /></svg>
                </PageNav>
              </WordScroll>
            </Work>
            <Status>
              <StatusItem $w={110}>Страница: 2 из 6</StatusItem>
              <StatusItem $w={101}>Число слов: 791</StatusItem>
              <StatusItem $w={92}><SpellIcon />русский</StatusItem>
              <ViewBar>
                <Views>{["Разметка", "Чтение", "Веб", "Структура", "Черновик"].map((v, i) => <ViewButton key={v} $on={i === 0} aria-label={v}><ViewIcon i={i} /></ViewButton>)}</Views>
                <ZoomValue>90%</ZoomValue>
                <Round aria-label="Мельче"><svg width="8" height="8"><path d="M0 4h8" stroke="#fff" strokeWidth="2" /></svg></Round>
                <ZoomTrack>
                  <svg width="14" height="13"><path d="M.5.5h8v7l-4 4-4-4z" fill="#ccc" stroke="#333" /><path d="M4.500 3v5M11.500 3v7" stroke="#333" /></svg>
                </ZoomTrack>
                <Round aria-label="Крупнее"><svg width="8" height="8"><path d="M0 4h8M4 0v8" stroke="#fff" strokeWidth="2" /></svg></Round>
                <Grip><svg width="11" height="11" fill="#ddd"><path d="M8 0h2v2H8zM8 4h2v2H8zM8 8h2v2H8zM4 4h2v2H4zM4 8h2v2H4zM0 8h2v2H0z" /></svg></Grip>
              </ViewBar>
            </Status>
          </Word>
          <Browser>
            <BrowserTitle>
              <button aria-label="Свернуть окно"><svg width="9" height="9"><path d="M1 8h6" stroke="#fff" strokeWidth="2" /></svg></button>
              <button aria-label="Восстановить окно"><svg width="10" height="10" stroke="#fff" fill="none"><path d="M.5 3.500h6v6h-6zM0 4.500h7M3.500 3V.5h6v6H7M3 1.500h7" /></svg></button>
              <button aria-label="Закрыть окно"><svg width="11" height="11" stroke="#fff" strokeWidth="2"><path d="M1 1l9 9M10 1l-9 9" /></svg></button>
            </BrowserTitle>
            <SearchRow>
              <input aria-label="Поиск" />
              <div>
                <button aria-label="Найти в сети"><svg width="13" height="13" fill="none" stroke="#1f66e0"><circle cx="8" cy="5" r="3.500" strokeWidth="2" /><path d="M5 8l-4 4" strokeWidth="2.500" /></svg></button>
                <button aria-label="Параметры поиска"><Down c="#15c" /></button>
              </div>
            </SearchRow>
            <CommandRow>
              <button>ница<Down c="#000" /></button>
              <button>
                <svg width="16" height="16" fill="none"><circle cx="8" cy="8" r="6.500" stroke="#7fa3c4" strokeWidth="3" strokeDasharray="2.400 1.600" /><circle cx="8" cy="8" r="4.500" stroke="#96b6d3" strokeWidth="3.500" /></svg>
                Сервис<Down c="#000" />
              </button>
              <button aria-label="Ещё"><svg width="9" height="6" stroke="#000" fill="none" strokeWidth="1.500"><path d="M0 0l3 3-3 3M5 0l3 3-3 3" /></svg></button>
            </CommandRow>
            <BrowserBody>
              <Site>
                <MailBar><a href="#mail">Войти в почту</a></MailBar>
                <Fragment>ьютера</Fragment>
                <Arrow><button>и</button></Arrow>
                <Bar $w={81} $h={3} $mt={52} />
                <Bar $w={92} $h={1} $mt={53} />
                <DateLine><b>2</b>17/09</DateLine>
              </Site>
              <BrowserScroll>
                <button aria-label="Прокрутить вверх"><svg width="9" height="6" fill="none" stroke="#555a66" strokeWidth="2"><path d="M1 5l3.500-3.500L8 5" /></svg></button>
                <div><Lines /></div>
                <button aria-label="Прокрутить вниз"><svg width="9" height="6" fill="none" stroke="#555a66" strokeWidth="2"><path d="M1 1l3.500 3.500L8 1" /></svg></button>
              </BrowserScroll>
            </BrowserBody>
            <BrowserStatus>
              <button>
                <svg width="12" height="12" fill="none"><path d="M7 7l4 4" stroke="#c89040" strokeWidth="2.500" /><circle cx="5" cy="5" r="4" fill="#dcebff" stroke="#2b6fd0" strokeWidth="1.500" /><path d="M3 5h4M5 3v4" stroke="#2b6fd0" /></svg>
                100%<Down c="#000" />
              </button>
            </BrowserStatus>
          </Browser>
        </Desktop>
        <Taskbar>
          <Start><Flag />пуск</Start>
          <Dots />
          <Task><IeIcon />Яндекс - Windows In...</Task>
          <Task $on><WordIcon />Лабораторная_рабо...</Task>
          <TrayDots />
          <Lang>RU</Lang>
          <Tray>
            <svg width="16" height="16"><circle cx="8" cy="8" r="7" fill="#3a3a3a" stroke="#777" /><path d="M9.500 4.500L6 8l3.500 3.500" stroke="#ddd" fill="none" strokeWidth="1.500" /></svg>
            <svg width="15" height="16"><path d="M1 2l3 1 1-2 4 5-3 2v-2z" fill="#2fc42f" /><path d="M4 11l7-4 3 3-8 4z" fill="#d0d4dc" stroke="#666" /></svg>
            <svg width="17" height="16"><path d="M6 2h10v8H6z" fill="#9a9a9a" stroke="#555" /><path d="M1 5h9v7H1z" fill="#777" stroke="#bbb" /><path d="M3 14h6M10 12h5" stroke="#aaa" /></svg>
            <svg width="15" height="16"><path d="M6 3q3-4 6 0" stroke="#e8a860" fill="none" strokeWidth="2" /><rect x="5" y="3" width="9" height="7" fill="#f0a050" /><path d="M0 4h5v6H0z" fill="#ccc" /><path d="M6 10h6l-3 5z" fill="#3aa0f0" /></svg>
            <svg width="16" height="16"><path d="M0 8Q3 1 8 1t8 7q-3-2-4 0-2-2-4 0-2-2-4 0-2-2-4 0z" fill="#23b23c" /><path d="M8 7v7q2 2 3-1" stroke="#1c8a30" fill="none" strokeWidth="1.500" /></svg>
            <time>10:32</time>
          </Tray>
        </Taskbar>
      </Screen>
    </>
  );
}
